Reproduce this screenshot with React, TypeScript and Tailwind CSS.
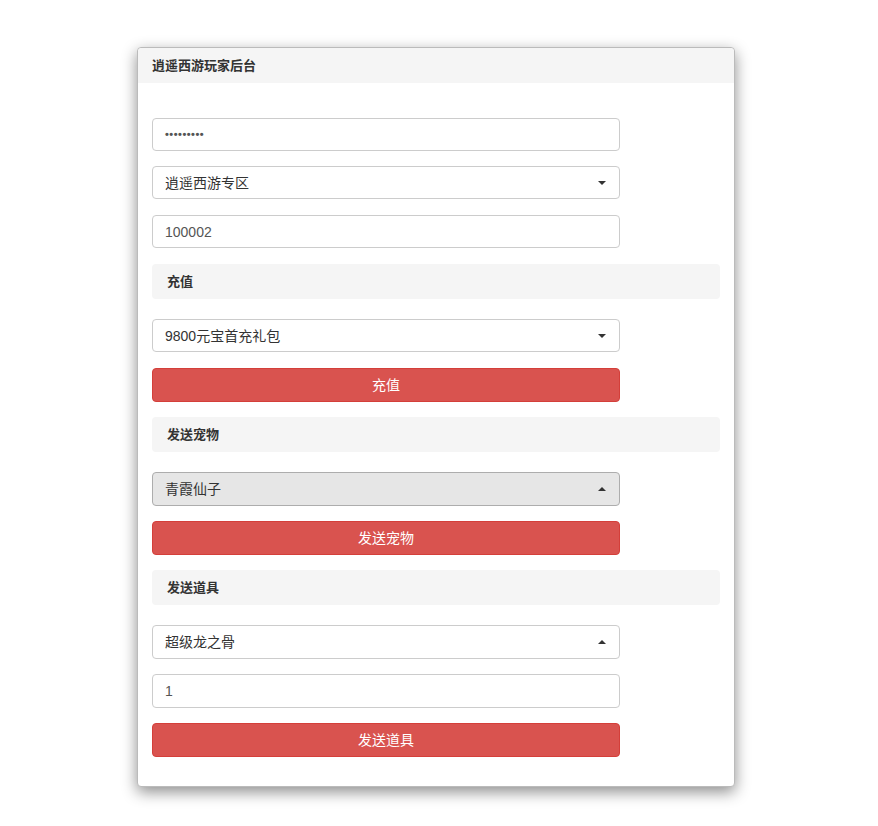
const font = { fontFamily: '"Liberation Sans", "Noto Sans CJK SC", sans-serif' }

function Caret({ up }: { up?: boolean }) {
  return up ? (
    <span className="h-0 w-0 border-x-4 border-b-4 border-x-transparent border-b-[#333]" />
  ) : (
    <span className="h-0 w-0 border-x-4 border-t-4 border-x-transparent border-t-[#333]" />
  )
}

function Field({ children, className = '' }: { children: React.ReactNode; className?: string }) {
  return (
    <div
      className={`flex w-[468px] items-center rounded border border-[#ccc] bg-white px-3 text-sm text-[#555] ${className}`}
    >
      {children}
    </div>
  )
}

function Select({ label, up, active, className = '' }: { label: string; up?: boolean; active?: boolean; className?: string }) {
  return (
    <div
      className={`flex w-[468px] items-center justify-between rounded border pl-3 pr-[13px] text-sm text-[#333] ${
        active ? 'border-[#adadad] bg-[#e6e6e6]' : 'border-[#ccc] bg-white'
      } ${className}`}
    >
      <span>{label}</span>
      <Caret up={up} />
    </div>
  )
}

function Section({ title }: { title: string }) {
  return (
    <div className="mb-[20px] flex h-[35px] items-center rounded bg-[#f5f5f5] px-[15px] text-[13px] font-bold text-[#333]">
      {title}
    </div>
  )
}

function DangerButton({ label, className = '' }: { label: string; className?: string }) {
  return (
    <div
      className={`flex h-[34px] w-[468px] items-center justify-center rounded border border-[#d43f3a] bg-[#d9534f] text-sm text-white ${className}`}
    >
      {label}
    </div>
  )
}

export default function App() {
  return (
    <div className="min-h-screen bg-white pl-[137px] pt-[47px]" style={font}>
      <div className="w-[598px] rounded border border-[#bbb] bg-white shadow-[0_5px_15px_rgba(0,0,0,0.45)]">
        <div className="flex h-[35px] items-center rounded-t bg-[#f5f5f5] px-[14px] text-[13px] font-bold text-[#333]">
          逍遥西游玩家后台
        </div>
        <div className="flex flex-col px-[14px] pb-[29px] pt-[35px]">
          <Field className="mb-[15px] h-[33px] text-[11px] font-bold tracking-[0.5px] text-[#444]">•••••••••</Field>
          <Select label="逍遥西游专区" className="mb-[16px] h-[33px]" />
          <Field className="mb-[16px] h-[33px]">100002</Field>

          <Section title="充值" />
          <Select label="9800元宝首充礼包" className="mb-[16px] h-[33px]" />
          <DangerButton label="充值" className="mb-[15px]" />

          <Section title="发送宠物" />
          <Select label="青霞仙子" up active className="mb-[15px] h-[34px]" />
          <DangerButton label="发送宠物" className="mb-[15px]" />

          <Section title="发送道具" />
          <Select label="超级龙之骨" up className="mb-[15px] h-[34px]" />
          <Field className="mb-[15px] h-[34px]">1</Field>
          <DangerButton label="发送道具" />
        </div>
      </div>
    </div>
  )
}
